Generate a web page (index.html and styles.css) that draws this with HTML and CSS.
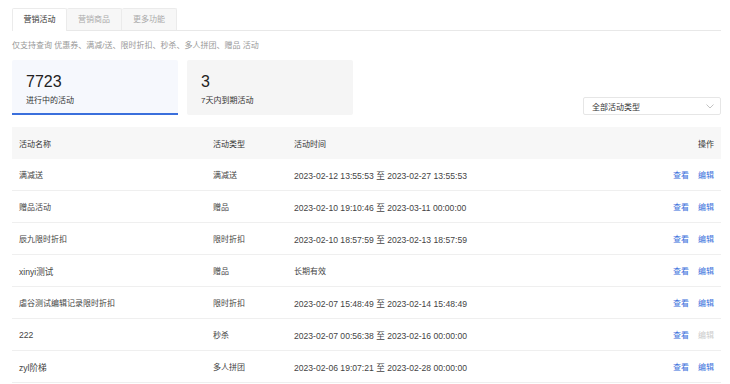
FILE: index.html
```html
<!DOCTYPE html>
<html lang="zh-CN">
<head>
    <meta charset="UTF-8">
    <meta name="viewport" content="width=device-width, initial-scale=1.0">
    <title>营销活动</title>
    <link rel="stylesheet" href="styles.css">
</head>
<body>
    <div class="page">
        <div class="tabs">
            <div class="tab active">营销活动</div>
            <div class="tab">营销商品</div>
            <div class="tab">更多功能</div>
        </div>

        <p class="hint">仅支持查询 优惠券、满减/送、限时折扣、秒杀、多人拼团、赠品 活动</p>

        <div class="summary">
            <div class="stat active">
                <div class="stat-num">7723</div>
                <div class="stat-label">进行中的活动</div>
            </div>
            <div class="stat">
                <div class="stat-num">3</div>
                <div class="stat-label">7天内到期活动</div>
            </div>
            <div class="select">
                <span>全部活动类型</span>
                <svg class="chevron" width="8" height="5" viewBox="0 0 8 5"><path d="M0.5 0.5 L4 4 L7.5 0.5" fill="none" stroke="#bbb" stroke-width="0.9"/></svg>
            </div>
        </div>

        <table class="list">
            <thead>
                <tr>
                    <th class="col-name">活动名称</th>
                    <th class="col-type">活动类型</th>
                    <th>活动时间</th>
                    <th class="col-ops">操作</th>
                </tr>
            </thead>
            <tbody>
                <tr>
                    <td>满减送</td>
                    <td>满减送</td>
                    <td class="time">2023-02-12 13:55:53 至 2023-02-27 13:55:53</td>
                    <td class="col-ops"><a>查看</a><a>编辑</a></td>
                </tr>
                <tr>
                    <td>赠品活动</td>
                    <td>赠品</td>
                    <td class="time">2023-02-10 19:10:46 至 2023-03-11 00:00:00</td>
                    <td class="col-ops"><a>查看</a><a>编辑</a></td>
                </tr>
                <tr>
                    <td>辰九限时折扣</td>
                    <td>限时折扣</td>
                    <td class="time">2023-02-10 18:57:59 至 2023-02-13 18:57:59</td>
                    <td class="col-ops"><a>查看</a><a>编辑</a></td>
                </tr>
                <tr>
                    <td class="latin">xinyi测试</td>
                    <td>赠品</td>
                    <td>长期有效</td>
                    <td class="col-ops"><a>查看</a><a>编辑</a></td>
                </tr>
                <tr>
                    <td>虐谷测试编辑记录限时折扣</td>
                    <td>限时折扣</td>
                    <td class="time">2023-02-07 15:48:49 至 2023-02-14 15:48:49</td>
                    <td class="col-ops"><a>查看</a><a>编辑</a></td>
                </tr>
                <tr>
                    <td class="latin">222</td>
                    <td>秒杀</td>
                    <td class="time">2023-02-07 00:56:38 至 2023-02-16 00:00:00</td>
                    <td class="col-ops"><a>查看</a><a class="disabled">编辑</a></td>
                </tr>
                <tr>
                    <td class="latin">zyl阶梯</td>
                    <td>多人拼团</td>
                    <td class="time">2023-02-06 19:07:21 至 2023-02-28 00:00:00</td>
                    <td class="col-ops"><a>查看</a><a>编辑</a></td>
                </tr>
            </tbody>
        </table>
    </div>
</body>
</html>
```

FILE: styles.css
```css
body {
    margin: 0;
    font-family: "Liberation Sans", "Noto Sans CJK SC", sans-serif;
    font-size: 8px;
    color: #333;
    background-color: #fff;
}

.page {
    padding: 8px 9px 0 12px;
}

.tabs {
    display: flex;
    border-bottom: 1px solid #e8e8e8;
    height: 22px;
}

.tab {
    width: 55px;
    height: 22px;
    line-height: 22px;
    text-align: center;
    color: #aaa;
    background-color: #f7f7f7;
    border: 1px solid #ebebeb;
    border-bottom: none;
    border-left: none;
    border-radius: 2px 2px 0 0;
    box-sizing: border-box;
}

.tab:first-child {
    border-left: 1px solid #ebebeb;
}

.tab.active {
    color: #333;
    background-color: #fff;
    height: 23px;
}

.hint {
    margin: 9px 0 0;
    color: #999;
    line-height: 12px;
}

.summary {
    display: flex;
    align-items: flex-end;
    gap: 9px;
    margin-top: 8px;
}

.stat {
    width: 166px;
    height: 55px;
    box-sizing: border-box;
    padding: 12px 14px 0;
    background-color: #f5f5f5;
    border-radius: 2px;
}

.stat.active {
    background-color: #f6f8fd;
    border-bottom: 2px solid #3a6fdc;
    border-radius: 2px 2px 0 0;
}

.stat-num {
    font-size: 16px;
    line-height: 20px;
    color: #222;
}

.stat-label {
    margin-top: 3px;
    line-height: 12px;
    color: #333;
}

.select {
    margin-left: auto;
    width: 138px;
    height: 18px;
    box-sizing: border-box;
    border: 1px solid #e6e6e6;
    border-radius: 2px;
    display: flex;
    align-items: center;
    justify-content: space-between;
    padding: 0 6px 0 8px;
    color: #333;
}

.list {
    width: 100%;
    margin-top: 12px;
    border-collapse: collapse;
}

.list th {
    background-color: #f7f7f7;
    font-weight: normal;
    text-align: left;
    height: 32px;
    padding: 0 7px;
    color: #333;
}

.list td {
    height: 31px;
    padding: 0 7px;
    border-bottom: 1px solid #efefef;
    color: #444;
}

.list td.time,
.list td.latin {
    font-size: 8.6px;
}

.col-name {
    width: 180px;
}

.col-type {
    width: 67px;
}

.list .col-ops {
    text-align: right;
    padding-right: 7px;
}

.col-ops a {
    color: #3a6fdc;
    margin-left: 9px;
    cursor: pointer;
}

.col-ops a.disabled {
    color: #ccc;
}
```
